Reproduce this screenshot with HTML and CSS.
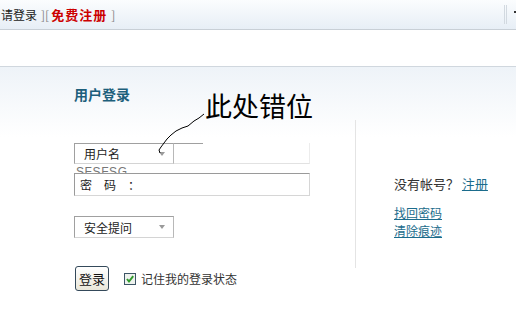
FILE: index.html
```html
<!DOCTYPE html>
<html>
<head>
	<meta charset="utf-8">
	<title>用户登录</title>
	<link rel="stylesheet" href="styles.css">
</head>
<body>
<div class="topbar">
	<span class="login">请登录</span>
	<span class="bracket">][</span>
	<a class="reg" href="#">免费注册</a>
	<span class="bracket">]</span>
	<span class="sep"></span>
	<span class="more"></span>
</div>
<div class="band"></div>

<div class="main">
	<div class="form-col">
		<h2 class="title">用户登录</h2>

		<div class="user-row">
			<div class="select">用户名<i class="caret"></i></div>
			<div class="user-input"></div>
		</div>
		<div class="ghost">SFSFSG</div>
		<div class="input pwd">密　码　：</div>

		<div class="select question">安全提问<i class="caret"></i></div>

		<div class="submit-row">
			<button class="btn">登录</button>
			<label class="remember">
				<svg class="check" width="12" height="12" viewBox="0 0 12 12">
					<rect x="0.5" y="0.5" width="11" height="11" fill="#eef2ee" stroke="#3d5566"/>
					<path d="M3 6 L5 8.5 L9.2 3.2" fill="none" stroke="#2f9a2a" stroke-width="2"/>
				</svg>
				记住我的登录状态
			</label>
		</div>
	</div>

	<div class="side">
		<p class="noacc">没有帐号？ <a href="#">注册</a></p>
		<p class="links"><a href="#">找回密码</a><br><a href="#">清除痕迹</a></p>
	</div>
</div>

<!-- annotation drawn over the page -->
<div class="note">此处错位</div>
<svg class="arrow" width="516" height="328" viewBox="0 0 516 328">
	<path d="M204 114 L199 118 L194 121 L188 126 L182 128 L176 131 L171 135 L167 139 L164 143 L161 147 L159 150 L160 153" fill="none" stroke="#000" stroke-width="1"/>
</svg>
</body>
</html>
```

FILE: styles.css
```css
body {
	margin: 0;
	position: relative;
	width: 516px;
	height: 328px;
	overflow: hidden;
	font-family: "Noto Sans CJK SC", sans-serif;
	font-size: 12px;
	color: #333;
	background: #fff;
}

a {
	color: #1b6c8c;
}

.topbar {
	display: flex;
	align-items: center;
	height: 29px;
	padding-left: 1px;
	border-bottom: 1px solid #c8cfd6;
	background: linear-gradient(#fbfdfe, #e7eef6);
	white-space: nowrap;
	overflow: hidden;
}

.topbar .login {
	color: #222;
}

.topbar .bracket {
	color: #888;
	margin: 0 1px 0 4px;
}

.topbar .reg {
	color: #cc0000;
	font-weight: bold;
	font-size: 13px;
	letter-spacing: 1px;
	text-decoration: none;
	margin-left: 1px;
}

.topbar .sep {
	margin-left: auto;
	width: 1px;
	height: 19px;
	border-left: 1px solid #d2d9e0;
	border-right: 1px solid #d2d9e0;
}

.topbar .more {
	width: 2px;
	height: 2px;
	margin: 0 0 5px 7px;
	background: #333;
}

.band {
	height: 36px;
	border-bottom: 1px solid #d0d7de;
}

.main {
	display: flex;
	height: 261px;
	padding-left: 74px;
	background: linear-gradient(#eef3f8, #fff 70px);
}

.form-col {
	display: flex;
	flex-direction: column;
	align-items: flex-start;
	width: 281px;
	padding-top: 19px;
}

.title {
	margin: 0;
	font-size: 14px;
	line-height: 16px;
	color: #1d5f7b;
}

.user-row {
	display: flex;
	margin-top: 41px;
	height: 21px;
}

.select {
	box-sizing: border-box;
	display: flex;
	align-items: center;
	justify-content: space-between;
	width: 100px;
	height: 21px;
	padding: 0 8px 0 9px;
	border: 1px solid;
	border-color: #a0a0a0 #b8b8b8 #d4d4d4 #a0a0a0;
	background: #fff;
	color: #222;
}

.caret {
	width: 0;
	height: 0;
	border-left: 3.5px solid transparent;
	border-right: 3.5px solid transparent;
	border-top: 4px solid #9a9a9a;
}

.user-input {
	position: relative;
	box-sizing: border-box;
	width: 136px;
	height: 21px;
	border-bottom: 1px solid #e2e2e2;
	border-right: 1px solid #ececec;
}

.user-input::before {
	content: "";
	position: absolute;
	top: 0;
	left: 0;
	width: 29px;
	height: 1px;
	background: #a0a0a0;
}

.ghost {
	box-sizing: border-box;
	height: 9px;
	padding: 2px 0 0 2px;
	overflow: hidden;
	font-family: "Liberation Sans", sans-serif;
	font-size: 12px;
	line-height: 12px;
	letter-spacing: 0.6px;
	color: #777;
}

.input {
	box-sizing: border-box;
	width: 236px;
	height: 23px;
	border: 1px solid;
	border-color: #9a9a9a #d6d6d6 #d6d6d6 #9a9a9a;
	background: #fff;
	color: #222;
}

.pwd {
	display: flex;
	align-items: center;
	padding-left: 5px;
}

.question {
	margin-top: 20px;
	height: 22px;
}

.submit-row {
	display: flex;
	align-items: center;
	margin-top: 28px;
	margin-left: 1px;
}

.btn {
	width: 34px;
	height: 25px;
	padding: 0;
	border: 1px solid #34495a;
	border-radius: 3px;
	background: linear-gradient(#ffffff, #e9e7da);
	font-family: "Noto Sans CJK SC", sans-serif;
	font-size: 13px;
	color: #111;
}

.remember {
	display: flex;
	align-items: center;
	margin-left: 15px;
	color: #333;
}

.check {
	margin-right: 5px;
}

.side {
	box-sizing: border-box;
	margin-top: 53px;
	height: 148px;
	padding: 55px 0 0 38px;
	border-left: 1px solid #e4e4e4;
}

.side p {
	margin: 0;
}

.noacc {
	font-size: 13px;
	line-height: 18px;
	color: #333;
}

.links {
	margin-top: 11px !important;
	line-height: 18px;
}

.note {
	position: absolute;
	left: 205px;
	top: 91px;
	font-size: 27px;
	line-height: 30px;
	color: #000;
}

.arrow {
	position: absolute;
	left: 0;
	top: 0;
	pointer-events: none;
}
```
